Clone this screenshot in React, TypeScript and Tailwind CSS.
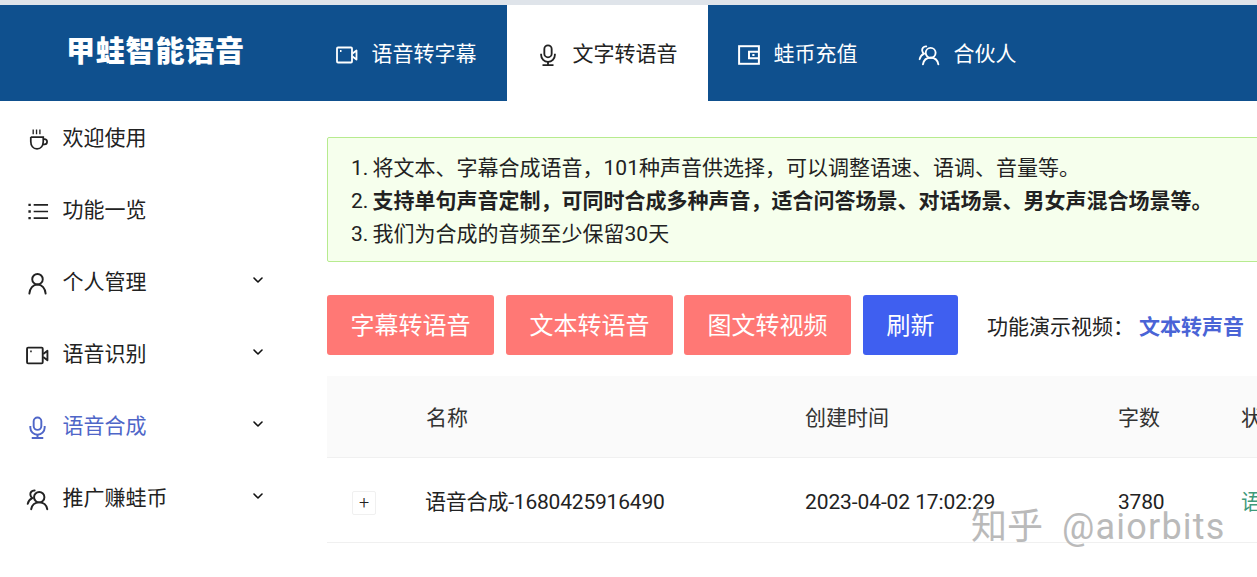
import { ChevronDown } from 'lucide-react';

function CupIcon({ className }: { className?: string }) {
  return (
    <svg viewBox="0 0 24 24" fill="none" stroke="currentColor" strokeWidth="1.800" className={className}>
      <path d="M5 9.500V14C5 18.500 7.500 21.800 11.500 21.800S18 18.500 18 14V9.500H5" />
      <path d="M18 11.500h1.200a2.800 2.800 0 0 1 0 5.600H17" />
      <path d="M7.500 1.500v5M11 1.500v5M14.500 1.500v5" strokeWidth="1.400" />
    </svg>
  );
}

function ListIcon({ className }: { className?: string }) {
  return (
    <svg viewBox="0 0 24 24" fill="none" stroke="currentColor" strokeWidth="1.800" className={className}>
      <path d="M8 5H23M8 12H23M8 19H23" />
      <path d="M2.500 5h2.500M2.500 12h2.500M2.500 19h2.500" strokeWidth="2.400" />
    </svg>
  );
}

function UserIcon({ className }: { className?: string }) {
  return (
    <svg viewBox="0 0 24 24" fill="none" stroke="currentColor" strokeWidth="2" strokeLinecap="round" className={className}>
      <circle cx="12" cy="7.500" r="5.500" />
      <path d="M3.500 22.500c.4-5.500 3.800-9.500 8.500-9.500s8.100 4 8.500 9.500" />
    </svg>
  );
}

function MicIcon({ className }: { className?: string }) {
  return (
    <svg viewBox="0 0 24 24" fill="none" stroke="currentColor" strokeWidth="2" className={className}>
      <rect x="8" y="1.500" width="8" height="13" rx="4" />
      <path d="M4.500 10.500V12a7.500 7.500 0 0 0 15 0v-1.500" />
      <path d="M12 19.500v3.500M6 23h12" />
    </svg>
  );
}

function VideoIcon({ className }: { className?: string }) {
  return (
    <svg viewBox="0 0 22 18" fill="none" stroke="currentColor" strokeWidth="1.800" className={className}>
      <rect x="1" y="1.500" width="15" height="15" rx="1" />
      <path d="M16.500 7.500 20.500 4.500V13.500L16.500 10.500" strokeLinejoin="round" />
      <path d="M4 5h1.500" />
    </svg>
  );
}

function WalletIcon({ className }: { className?: string }) {
  return (
    <svg viewBox="0 0 20 20" fill="none" stroke="currentColor" strokeWidth="1.800" className={className}>
      <rect x="1" y="2" width="18" height="16" />
      <path d="M18.500 7H10v6h8.500" />
      <path d="M13 10h2" />
    </svg>
  );
}

function PartnerIcon({ className }: { className?: string }) {
  return (
    <svg viewBox="0 0 20 20" fill="none" stroke="currentColor" strokeWidth="1.700" strokeLinecap="round" className={className}>
      <circle cx="11.500" cy="8" r="4.500" />
      <path d="M4.500 18.500c.6-3.600 3.300-6 7-6s6.400 2.400 7 6" />
      <path d="M7.500 2.200C5 2 3.500 4 3.800 6c.2 1.300.9 2.200 1.700 2.800-2 .9-3.500 2.600-4 5" />
    </svg>
  );
}

const tabs = [
  { name: '语音转字幕', icon: VideoIcon, w: 'w-[201px]' },
  { name: '文字转语音', icon: MicIcon, w: 'w-[201px]', active: true },
  { name: '蛙币充值', icon: WalletIcon, w: 'w-[180px]' },
  { name: '合伙人', icon: PartnerIcon, w: 'w-[160px]' },
];

const menu = [
  { name: '欢迎使用', icon: CupIcon },
  { name: '功能一览', icon: ListIcon },
  { name: '个人管理', icon: UserIcon, arrow: true },
  { name: '语音识别', icon: VideoIcon, arrow: true },
  { name: '语音合成', icon: MicIcon, arrow: true, active: true },
  { name: '推广赚蛙币', icon: PartnerIcon, arrow: true },
];

export default function App() {
  return (
    <div className="relative h-[577px] w-[1257px] overflow-hidden bg-white text-[21px] text-[#222] font-['Roboto','Noto_Sans_CJK_SC',sans-serif]">
      <div className="h-[5px] bg-[#dfe4ea]" />
      <header className="flex h-[96px] bg-[#0f508e] text-white">
        <div className="flex w-[306px] items-center pl-[66px] text-[29px] font-black tracking-[0.800px]">甲蛙智能语音</div>
        {tabs.map(t => (
          <div key={t.name} className={`flex items-center gap-[13.500px] pl-[30px] pt-[4px] ${t.w} ${t.active ? 'bg-white text-[#222]' : ''}`}>
            <t.icon className="h-[22px] w-[22px]" />
            <span>{t.name}</span>
          </div>
        ))}
      </header>

      <div className="flex">
        <aside className="w-[327px] shrink-0 pt-[2px]">
          {menu.map(m => (
            <div key={m.name} className={`flex h-[72px] items-center pl-[26px] pr-[61px] ${m.active ? 'text-[#4f66c8]' : ''}`}>
              <m.icon className="h-[23px] w-[23px]" />
              <span className="ml-[13.500px] flex-1">{m.name}</span>
              {m.arrow && <ChevronDown className="-mt-[6px] h-[16px] w-[16px] text-[#111]" strokeWidth={2.400} />}
            </div>
          ))}
        </aside>

        <main className="min-w-0 flex-1 overflow-hidden pt-[36px]">
          <div className="h-[125px] w-[1000px] rounded-[2px] border border-[#b7eb8f] bg-[#f6ffed] pl-[23px] pt-[14px] leading-[33px] [word-spacing:-1px]">
            <div>1. 将文本、字幕合成语音，101种声音供选择，可以调整语速、语调、音量等。</div>
            <div>2. <b className="font-bold">支持单句声音定制，可同时合成多种声音，适合问答场景、对话场景、男女声混合场景等。</b></div>
            <div>3. 我们为合成的音频至少保留30天</div>
          </div>

          <div className="mt-[33px] flex h-[60px] items-center whitespace-nowrap text-[24px] text-white">
            <button className="h-full w-[167px] rounded-[3px] bg-[#ff7875] pt-[2px]">字幕转语音</button>
            <button className="ml-[12px] h-full w-[167px] rounded-[3px] bg-[#ff7875] pt-[2px]">文本转语音</button>
            <button className="ml-[11px] h-full w-[167px] rounded-[3px] bg-[#ff7875] pt-[2px]">图文转视频</button>
            <button className="ml-[12px] h-full w-[95px] rounded-[3px] bg-[#3f5ff0] pt-[2px]">刷新</button>
            <span className="ml-[29px] pt-[5px] text-[21px] text-[#222]">功能演示视频：</span>
            <span className="ml-[5px] pt-[5px] text-[21px] font-bold text-[#4a64d6]">文本转声音</span>
          </div>

          <div className="mt-[21px] w-[1000px]">
            <div className="flex h-[82px] items-center border-b border-[#f0f0f0] bg-[#fafafa] pt-[4px] text-[#333]">
              <span className="ml-[99px] w-[379px] shrink-0">名称</span>
              <span className="w-[313px] shrink-0">创建时间</span>
              <span className="w-[123px] shrink-0">字数</span>
              <span className="shrink-0">状态</span>
            </div>
            <div className="flex h-[85px] items-center border-b border-[#f0f0f0] pt-[5px]">
              <span className="ml-[25px] mr-[49px] flex h-[24px] w-[24px] shrink-0 items-center justify-center rounded-[2px] border border-[#f0f0f0] text-[18px] font-light leading-none">+</span>
              <span className="w-[380px] shrink-0 tracking-[-0.200px]">语音合成-1680425916490</span>
              <span className="w-[313px] shrink-0 tracking-[-0.100px]">2023-04-02 17:02:29</span>
              <span className="w-[123px] shrink-0 tracking-[-0.200px]">3780</span>
              <span className="shrink-0 text-[#3f9a7a]">语音合成成功</span>
            </div>
          </div>
        </main>
      </div>

      <div className="absolute left-[971px] top-[503px] whitespace-nowrap text-[36px] leading-[48px] text-[#bababa]">
        知乎<span className="ml-[19px] tracking-[1.200px]">@aiorbits</span>
      </div>
    </div>
  );
}
